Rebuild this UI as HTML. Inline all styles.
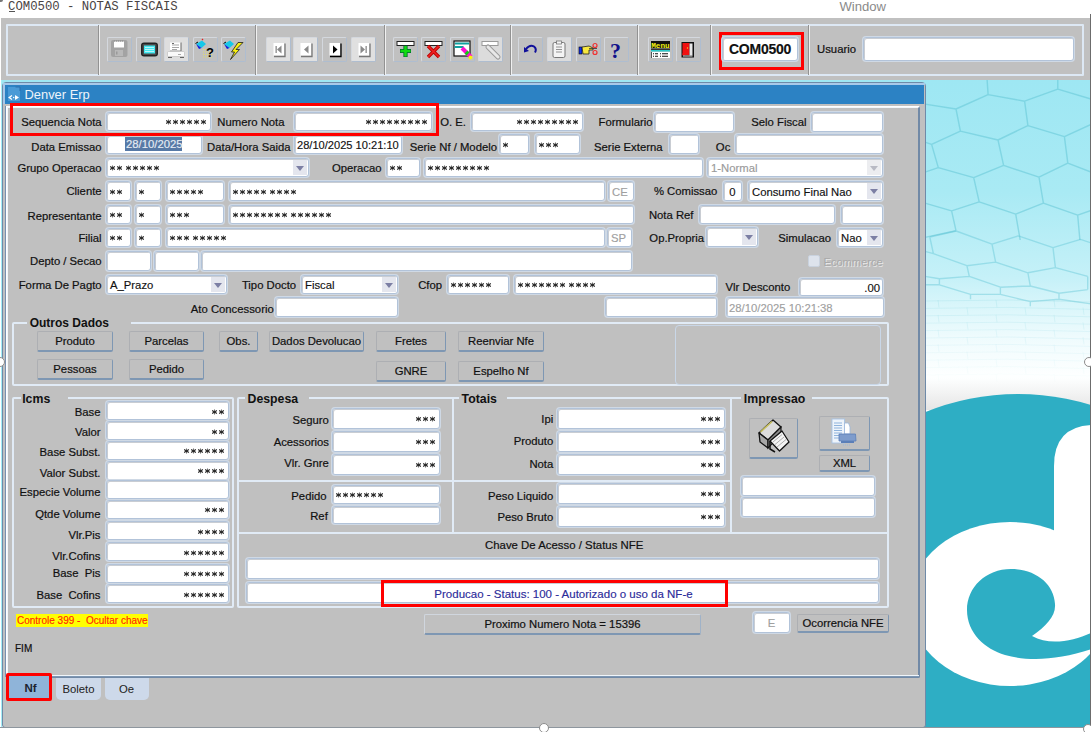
<!DOCTYPE html><html><head><meta charset="utf-8"><style>
*{box-sizing:border-box}
body{margin:0;width:1091px;height:732px;overflow:hidden;position:relative;background:#fff;font-family:"Liberation Sans",sans-serif;}
.a{position:absolute}
.f{position:absolute;background:#fff;border:1px solid #b2c3d9;border-radius:3px;box-shadow:inset 1px 1px 0 #c9cdd3,0 0 0 1px #cfd9e5;font-size:11.3px;color:#111;-webkit-text-stroke-width:0.15px;white-space:nowrap;overflow:hidden;padding:0 3px}
.st{font-size:8px;-webkit-text-stroke-width:0;position:relative;top:-1px}
.k{display:inline-block;vertical-align:middle;margin-top:-1px}
.f.s span{position:relative;top:2px}
.l{position:absolute;font-size:11.3px;color:#111;-webkit-text-stroke-width:0.2px;white-space:nowrap;text-align:right}
.c .ab{position:absolute;right:1px;top:1px;bottom:1px;width:14px}
.c .tri{position:absolute;left:3px;top:50%;margin-top:-2px;width:0;height:0;border-left:4.5px solid transparent;border-right:4.5px solid transparent;border-top:5px solid #7c7fa4}
.b{position:absolute;background:#c0c0c0;border:1px solid #adafb3;border-right-color:#7e97b3;border-bottom:2px solid #7e97b3;border-radius:2px;font-size:11.3px;color:#111;-webkit-text-stroke-width:0.2px;text-align:center;white-space:nowrap}
.lg{position:absolute;font-size:12.3px;font-weight:bold;color:#111;white-space:nowrap;background:#c0c0c0;line-height:14px;height:14px}
.tb{position:absolute;top:37px;width:25px;height:25px;border:1px solid #aebdd0;border-top-color:#d4d8de;border-left-color:#d4d8de;border-radius:2px;background:#c0c0c0}
</style></head><body>
<svg width="0" height="0" style="position:absolute"><defs><g id="k"><path d="M3.5 0.6V5.4" stroke="#6a6a6a" stroke-width="1.05"/><path d="M1.1 1.6L5.9 4.4M1.1 4.4L5.9 1.6" stroke="#262626" stroke-width="1.1"/></g><g fill="#505050"><circle cx="3.5" cy="1.05" r="0.75"/><circle cx="3.5" cy="4.95" r="0.75"/></g></g><g fill="#3a3a3a"><circle cx="3.5" cy="1" r="0.75"/><circle cx="3.5" cy="5" r="0.75"/></g></g><g fill="#3a3a3a"><circle cx="3.5" cy="0.9" r="0.8"/><circle cx="3.5" cy="5.1" r="0.8"/></g></g></defs></svg><div class="a" style="left:0;top:0;width:1091px;height:18px;background:#fff"></div>
<div class="a" style="left:0;top:0;font-family:'Liberation Mono',monospace;font-size:12.3px;color:#4a4444;left:8px;top:0px;line-height:14px;white-space:pre">COM0500 - NOTAS FISCAIS</div>
<div class="a" style="left:839.5px;top:-0.5px;font-size:13.1px;color:#8a8a8a;line-height:14px">Window</div>
<div class="a" style="left:9px;top:11px;width:6px;height:1px;background:#555"></div>
<div class="a" style="left:0;top:0;width:3px;height:2px;background:#777;border-radius:0 0 3px 0"></div>
<svg width="1091" height="732" viewBox="0 0 1091 732" style="position:absolute;left:0;top:0"><defs><linearGradient id="bgg" x1="0" y1="0" x2="0" y2="1"><stop offset="0" stop-color="#9ee7f3"/><stop offset="0.35" stop-color="#a9eaf4"/><stop offset="0.62" stop-color="#c6f1f8"/><stop offset="0.8" stop-color="#eefbfd"/><stop offset="0.92" stop-color="#fdffff"/><stop offset="1" stop-color="#fff"/></linearGradient><linearGradient id="fade" x1="0" y1="0" x2="0" y2="1"><stop offset="0" stop-color="#fff" stop-opacity="0"/><stop offset="1" stop-color="#fff" stop-opacity="1"/></linearGradient><radialGradient id="sh" cx="0.5" cy="1" r="0.6"><stop offset="0" stop-color="#dcdcdc"/><stop offset="1" stop-color="#fff" stop-opacity="0"/></radialGradient></defs><rect x="0" y="80" width="1091" height="320" fill="url(#bgg)"/><rect x="0" y="400" width="1091" height="332" fill="#fff"/><path d="M987.0 78.0L988.1 94.6M988.1 94.6L956.0 109.0M988.1 94.6L1024.6 101.2M1024.6 101.2L1057.8 89.1M1057.8 89.1L1057.8 78.0M1057.8 89.1L1091.0 99.0M956.0 109.0L925.0 104.1M956.0 109.0L960.4 131.1M1024.6 101.2L1027.9 125.6M960.4 131.1L998.0 140.0M960.4 131.1L931.6 144.4M1027.9 125.6L998.0 140.0M1027.9 125.6L1064.4 136.7M998.0 140.0L1003.6 165.4M1064.4 136.7L1067.8 163.2M1064.4 136.7L1091.0 124.5M931.6 144.4L938.3 167.6M931.6 144.4L925.0 142.2M1003.6 165.4L973.7 177.6M1003.6 165.4L1039.0 177.2M938.3 167.6L973.7 177.6M938.3 167.6L925.0 172.1M1067.8 163.2L1039.0 177.2M1067.8 163.2L1091.0 172.1M973.7 177.6L979.2 201.9M1039.0 177.2L1043.4 203.1M979.2 201.9L951.6 210.8M979.2 201.9L1015.7 214.1M1043.4 203.1L1015.7 214.1M1043.4 203.1L1077.7 215.2M951.6 210.8L956.0 230.7M951.6 210.8L925.0 203.1M1015.7 214.1L1020.2 240.0M1077.7 215.2L1079.9 240.0M1077.7 215.2L1091.0 210.4M956.0 230.7L925.0 237.4" stroke="#5ec3d4" stroke-opacity="0.5" stroke-width="1.4" fill="none"/><path d="M956.1 231.0L929.8 237.0M956.1 231.0L992.0 244.1M1018.3 235.8L992.0 244.1M1018.3 235.8L1053.0 247.7M1080.5 239.4L1053.0 247.7M1080.5 239.4L1091.0 242.9M929.8 237.0L933.4 253.7M992.0 244.1L995.6 262.1M1053.0 247.7L1055.4 267.6M933.4 253.7L966.9 265.7M933.4 253.7L925.0 251.3M995.6 262.1L966.9 265.7M995.6 262.1L1027.9 272.8M1055.4 267.6L1027.9 272.8M1055.4 267.6L1087.7 276.4M966.9 265.7L969.3 276.4M1027.9 272.8L1030.3 286.0M1087.7 276.4L1087.7 289.6M969.3 276.4L939.4 278.8M969.3 276.4L1000.4 287.2M1030.3 286.0L1000.4 287.2M1030.3 286.0L1059.0 293.2M1087.7 289.6L1059.0 293.2M939.4 278.8L939.4 284.8M939.4 278.8L925.0 276.4M1000.4 287.2L1000.4 294.4M1059.0 293.2L1059.0 299.2M925.0 284.8L939.4 284.8M939.4 284.8L970.5 294.4M1000.4 294.4L970.5 294.4M1000.4 294.4L1030.3 301.6M1059.0 299.2L1030.3 301.6M1059.0 299.2L1091.0 303.9M970.5 294.4L970.5 299.2M1030.3 301.6L1030.3 306.3M1091.0 303.9L1091.0 308.7" stroke="#5ec3d4" stroke-opacity="0.42" stroke-width="1.4" fill="none"/><path d="M925 301.0Q1008 298.5 1091 302.0M938 300.0L939 307.5M996 300.0L997 307.5M1054 300.0L1055 307.5" stroke="#7fd0de" stroke-opacity="0.20" stroke-width="1" fill="none"/><path d="M925 308.4Q1008 305.9 1091 309.4M967 307.4L968 314.9M1025 307.4L1026 314.9M1083 307.4L1084 314.9" stroke="#7fd0de" stroke-opacity="0.18" stroke-width="1" fill="none"/><path d="M925 315.8Q1008 313.3 1091 316.8M938 314.8L939 322.3M996 314.8L997 322.3M1054 314.8L1055 322.3" stroke="#7fd0de" stroke-opacity="0.17" stroke-width="1" fill="none"/><path d="M925 323.2Q1008 320.7 1091 324.2M967 322.2L968 329.7M1025 322.2L1026 329.7M1083 322.2L1084 329.7" stroke="#7fd0de" stroke-opacity="0.15" stroke-width="1" fill="none"/><path d="M925 330.6Q1008 328.1 1091 331.6M938 329.6L939 337.1M996 329.6L997 337.1M1054 329.6L1055 337.1" stroke="#7fd0de" stroke-opacity="0.13" stroke-width="1" fill="none"/><path d="M925 338.0Q1008 335.5 1091 339.0M967 337.0L968 344.5M1025 337.0L1026 344.5M1083 337.0L1084 344.5" stroke="#7fd0de" stroke-opacity="0.12" stroke-width="1" fill="none"/><path d="M925 345.4Q1008 342.9 1091 346.4M938 344.4L939 351.9M996 344.4L997 351.9M1054 344.4L1055 351.9" stroke="#7fd0de" stroke-opacity="0.10" stroke-width="1" fill="none"/><path d="M925 352.8Q1008 350.3 1091 353.8M967 351.8L968 359.3M1025 351.8L1026 359.3M1083 351.8L1084 359.3" stroke="#7fd0de" stroke-opacity="0.08" stroke-width="1" fill="none"/><path d="M925 360.2Q1008 357.7 1091 361.2M938 359.2L939 366.7M996 359.2L997 366.7M1054 359.2L1055 366.7" stroke="#7fd0de" stroke-opacity="0.07" stroke-width="1" fill="none"/><path d="M925 367.6Q1008 365.1 1091 368.6M967 366.6L968 374.1M1025 366.6L1026 374.1M1083 366.6L1084 374.1" stroke="#7fd0de" stroke-opacity="0.05" stroke-width="1" fill="none"/><path d="M925 375.0Q1008 372.5 1091 376.0M938 374.0L939 381.5M996 374.0L997 381.5M1054 374.0L1055 381.5" stroke="#7fd0de" stroke-opacity="0.03" stroke-width="1" fill="none"/><defs><linearGradient id="shd" x1="0" y1="0" x2="0" y2="1"><stop offset="0" stop-color="#d0d0d0" stop-opacity="0"/><stop offset="1" stop-color="#d0d0d0" stop-opacity="0.55"/></linearGradient></defs><rect x="925" y="378" width="166" height="32" fill="url(#shd)"/><circle cx="1018" cy="641" r="247" fill="#2eaec4"/><ellipse cx="1010" cy="604" rx="101" ry="82" fill="#fff"/><path d="M1054 604 V466 Q1054 425 1095 425 V604 Z" fill="#fff"/><path d="M1032 636 C1046 626 1056 616 1055 604 C1054 584 1036 569 1011 569 C986 569 967 587 967 610 C967 633 985 649 1005 655 C1030 662 1060 660 1095 648 L1095 631 C1075 641 1050 646 1032 636 Z" fill="#2eaec4"/></svg>
<div class="a" style="left:0;top:80px;width:1px;height:647px;background:#fff"></div>
<div class="a" style="left:1px;top:80px;width:1px;height:647px;background:#a6eef6"></div>
<div class="a" style="left:1px;top:18px;width:1089px;height:62px;background:#c0c0c0"></div>
<div class="a" style="left:1090px;top:14px;width:1px;height:718px;background:#6c6c6c"></div>
<div class="a" style="left:6px;top:24px;width:1078px;height:52px;border:2px solid #dde8f4;border-radius:1px"></div>
<div class="a" style="left:98px;top:25px;width:2px;height:50px;background:#f0f0f0;border-left:1px solid #929292"></div>
<div class="a" style="left:255px;top:25px;width:2px;height:50px;background:#f0f0f0;border-left:1px solid #929292"></div>
<div class="a" style="left:384px;top:25px;width:2px;height:50px;background:#f0f0f0;border-left:1px solid #929292"></div>
<div class="a" style="left:510px;top:25px;width:2px;height:50px;background:#f0f0f0;border-left:1px solid #929292"></div>
<div class="a" style="left:637px;top:25px;width:2px;height:50px;background:#f0f0f0;border-left:1px solid #929292"></div>
<div class="a" style="left:710px;top:25px;width:2px;height:50px;background:#f0f0f0;border-left:1px solid #929292"></div>
<div class="a" style="left:808px;top:25px;width:2px;height:50px;background:#f0f0f0;border-left:1px solid #929292"></div>
<div class="tb" style="left:107.0px"><svg width="25" height="25" viewBox="0 0 25 25" style="position:absolute;left:-1px;top:-1px"><rect x="4" y="3" width="16.5" height="17" rx="2" fill="#a3a3a3"/><rect x="7" y="4.5" width="10" height="6" fill="#fff"/><rect x="8" y="13" width="8" height="6" fill="#b9b9b9"/><rect x="9" y="14.5" width="1.5" height="3" fill="#9a9a9a"/><path d="M7 4h1M9 4h1M11 4h1M13 4h1M15 4h1" stroke="#8a8a8a" stroke-width="1"/></svg></div>
<div class="tb" style="left:135.5px"><svg width="25" height="25" viewBox="0 0 25 25" style="position:absolute;left:-1px;top:-1px"><rect x="5" y="5.5" width="17" height="14" rx="3" fill="#222"/><rect x="6.5" y="7" width="14" height="11" rx="1" fill="#4a4a4a"/><rect x="8" y="8.5" width="11" height="8" fill="#44e8f0"/><path d="M9 10.5h9M9 12.5h9M9 14.5h9" stroke="#d8f8fa" stroke-width="0.8"/></svg></div>
<div class="tb" style="left:164.0px"><svg width="25" height="25" viewBox="0 0 25 25" style="position:absolute;left:-1px;top:-1px"><rect x="1" y="1" width="23" height="23" fill="#dedede"/><path d="M6 5.5h11v8.5H6Z" fill="#fff"/><path d="M17 5.5v8.5" stroke="#666" stroke-width="1"/><path d="M6 14h11" stroke="#777" stroke-width="0.8"/><path d="M8 8h7M8 10.5h7M8 12.5h5" stroke="#6a6a6a" stroke-width="0.6"/><path d="M8 6.5h2" stroke="#444" stroke-width="0.8"/><rect x="3.5" y="14.5" width="17" height="5" rx="1" fill="#fafafa" stroke="#b8b8b8" stroke-width="0.6"/><path d="M4 20.5h4M16 20.5h4" stroke="#555" stroke-width="0.9"/><path d="M14 17.5h3" stroke="#888" stroke-width="0.7"/></svg></div>
<div class="tb" style="left:192.7px"><svg width="25" height="25" viewBox="0 0 25 25" style="position:absolute;left:-1px;top:-1px"><path d="M3 7 L9 3.5 L13 7 L8.5 11 Z" fill="#16c8e8"/><path d="M3 7 L8.5 11 L6 12 Z" fill="#1020d8"/><path d="M2.5 6.5 L5 5" stroke="#000" stroke-width="1"/><path d="M9 3 L10 2" stroke="#e02020" stroke-width="1.2"/><path d="M10 12.5h10M10 15h10M10 17.5h10M10 20h10" stroke="#e8e060" stroke-width="0.9" stroke-dasharray="1 1"/><text x="13" y="20" font-family="Liberation Sans" font-weight="bold" font-size="13" fill="#000">?</text></svg></div>
<div class="tb" style="left:220.7px"><svg width="25" height="25" viewBox="0 0 25 25" style="position:absolute;left:-1px;top:-1px"><path d="M3 7 L9 3.5 L13 7 L8.5 11 Z" fill="#16c8e8"/><path d="M3 7 L8.5 11 L6 12 Z" fill="#1020d8"/><path d="M2.5 6.5 L5 5" stroke="#000" stroke-width="1"/><path d="M22 5.5 L15 12.5 L18.5 12.5 L9.5 22.5 L13.5 15 L10.5 15 L17 5.5 Z" fill="#f8f010" stroke="#1a1a1a" stroke-width="0.8" stroke-linejoin="round"/></svg></div>
<div class="tb" style="left:265.6px"><svg width="25" height="25" viewBox="0 0 25 25" style="position:absolute;left:-1px;top:-1px"><rect x="1" y="1" width="23" height="23" fill="#e0e0e0"/><rect x="7.5" y="6" width="10.5" height="12.5" fill="#fff"/><path d="M8 19.5h11V6.5" stroke="#777" stroke-width="1.3" fill="none"/><rect x="9.5" y="9" width="1.3" height="7" fill="#8a8a8a"/><path d="M15.5 8.5 L11 12.5 L15.5 16.5 Z" fill="#8a8a8a"/></svg></div>
<div class="tb" style="left:292.7px"><svg width="25" height="25" viewBox="0 0 25 25" style="position:absolute;left:-1px;top:-1px"><rect x="1" y="1" width="23" height="23" fill="#e0e0e0"/><rect x="7.5" y="6" width="10.5" height="12.5" fill="#fff"/><path d="M8 19.5h11V6.5" stroke="#777" stroke-width="1.3" fill="none"/><path d="M15.5 8.5 L11 12.5 L15.5 16.5 Z" fill="#8a8a8a"/></svg></div>
<div class="tb" style="left:321.5px"><svg width="25" height="25" viewBox="0 0 25 25" style="position:absolute;left:-1px;top:-1px"><rect x="7.5" y="6" width="10.5" height="12.5" fill="#fff"/><path d="M8 19.5h11V6.5" stroke="#000" stroke-width="1.3" fill="none"/><path d="M11 8.5 L15.5 12.5 L11 16.5 Z" fill="#000"/></svg></div>
<div class="tb" style="left:350.5px"><svg width="25" height="25" viewBox="0 0 25 25" style="position:absolute;left:-1px;top:-1px"><rect x="1" y="1" width="23" height="23" fill="#e0e0e0"/><rect x="7.5" y="6" width="10.5" height="12.5" fill="#fff"/><path d="M8 19.5h11V6.5" stroke="#777" stroke-width="1.3" fill="none"/><rect x="14.5" y="9" width="1.3" height="7" fill="#8a8a8a"/><path d="M9.5 8.5 L14 12.5 L9.5 16.5 Z" fill="#8a8a8a"/></svg></div>
<div class="tb" style="left:392.6px"><svg width="25" height="25" viewBox="0 0 25 25" style="position:absolute;left:-1px;top:-1px"><rect x="4" y="4.5" width="17" height="4" fill="#fff" stroke="#222" stroke-width="1"/><path d="M12.5 8.5 V20 M7 14 H18" stroke="#063" stroke-width="4.2"/><path d="M12.5 9 V19.5 M7.5 14 H17.5" stroke="#1d1" stroke-width="2.6"/></svg></div>
<div class="tb" style="left:420.9px"><svg width="25" height="25" viewBox="0 0 25 25" style="position:absolute;left:-1px;top:-1px"><rect x="4" y="4.5" width="17" height="4" fill="#fff" stroke="#222" stroke-width="1"/><path d="M7 9 L18 20 M18 9 L7 20" stroke="#b00" stroke-width="3.4"/><path d="M7 9 L18 20 M18 9 L7 20" stroke="#e22" stroke-width="1.6"/></svg></div>
<div class="tb" style="left:449.5px"><svg width="25" height="25" viewBox="0 0 25 25" style="position:absolute;left:-1px;top:-1px"><rect x="4" y="4" width="16" height="15" fill="#fff" stroke="#111" stroke-width="1.2"/><rect x="5" y="5.5" width="14" height="2" fill="#10a0a0"/><rect x="4.5" y="9" width="9" height="2" fill="#10a0a0"/><path d="M12 11 L21 20" stroke="#ff10d0" stroke-width="4"/><path d="M16 15 L18 17" stroke="#10d010" stroke-width="4"/><circle cx="20.5" cy="20.5" r="2" fill="#f8f010"/></svg></div>
<div class="tb" style="left:477.6px"><svg width="25" height="25" viewBox="0 0 25 25" style="position:absolute;left:-1px;top:-1px"><rect x="1" y="1" width="23" height="23" fill="#dcdcdc"/><rect x="4" y="4.5" width="16" height="4" fill="#fff" stroke="#9a9a9a" stroke-width="1"/><path d="M10 10 L20 20" stroke="#9a9a9a" stroke-width="5" stroke-linecap="round"/><path d="M10 10 L20 20" stroke="#e8e8e8" stroke-width="3" stroke-linecap="round"/></svg></div>
<div class="tb" style="left:517.9px"><svg width="25" height="25" viewBox="0 0 25 25" style="position:absolute;left:-1px;top:-1px"><path d="M8 12 Q12 7 16 9.5 Q19 12 17 15.5" stroke="#10109a" stroke-width="2" fill="none"/><path d="M6 10 L6 15.5 L11 14 Z" fill="#10109a"/></svg></div>
<div class="tb" style="left:546.9px"><svg width="25" height="25" viewBox="0 0 25 25" style="position:absolute;left:-1px;top:-1px"><rect x="1" y="1" width="23" height="23" fill="#dcdcdc"/><rect x="6" y="5.5" width="12" height="15" rx="1.5" fill="#f4f4f4" stroke="#777" stroke-width="1"/><rect x="9.5" y="4" width="5" height="3" fill="#f4f4f4" stroke="#777" stroke-width="0.8"/><path d="M9 10h6M9 12.5h6M9 15h6" stroke="#888" stroke-width="0.9"/></svg></div>
<div class="tb" style="left:575.7px"><svg width="25" height="25" viewBox="0 0 25 25" style="position:absolute;left:-1px;top:-1px"><rect x="3" y="10" width="3" height="7" fill="#1030f0" stroke="#000" stroke-width="0.6"/><path d="M6 10 L13 9 L17 11 L17 13 L13 13 L13 17 L7 17 Z" fill="#f8e840" stroke="#222" stroke-width="0.8"/><circle cx="19" cy="8.5" r="2" fill="none" stroke="#f03030" stroke-width="1.2"/><circle cx="19" cy="15.5" r="2" fill="none" stroke="#f03030" stroke-width="1.2"/><path d="M13 11.5 L21 11.5" stroke="#333" stroke-width="0.8"/></svg></div>
<div class="tb" style="left:603.7px"><svg width="25" height="25" viewBox="0 0 25 25" style="position:absolute;left:-1px;top:-1px"><text x="6" y="20.5" font-family="Liberation Serif" font-weight="bold" font-size="22" fill="#10108a">?</text></svg></div>
<div class="tb" style="left:647.9px"><svg width="25" height="25" viewBox="0 0 25 25" style="position:absolute;left:-1px;top:-1px"><rect x="3" y="4" width="19" height="7.5" fill="#111"/><text x="3.2" y="10.5" font-family="Liberation Mono" font-weight="bold" font-size="8" fill="#f0f010" textLength="18.5" lengthAdjust="spacingAndGlyphs">Menu</text><rect x="3" y="12" width="19" height="1.3" fill="#333"/><rect x="3" y="13.2" width="19" height="1.2" fill="#10d8d8"/><rect x="3" y="15" width="19" height="6" fill="#fff"/><path d="M3.5 15 V21" stroke="#555" stroke-width="1"/><path d="M5 16.8h1M7 16.8h3M12 16.8h1M14 16.8h6M5 19.2h1M7 19.2h3M12 19.2h1M14 19.2h6" stroke="#111" stroke-width="1.1"/></svg></div>
<div class="tb" style="left:675.9px"><svg width="25" height="25" viewBox="0 0 25 25" style="position:absolute;left:-1px;top:-1px"><rect x="5.5" y="5" width="12.5" height="15.5" fill="#111"/><rect x="6.5" y="6" width="7" height="12" fill="#f01010"/><path d="M6.5 16 L9 18.5 L6.5 18.5Z" fill="#f01010"/><rect x="13.5" y="6.5" width="3" height="12" fill="#e8e8e8"/><rect x="7" y="18.5" width="9.5" height="1" fill="#ddd"/><circle cx="11.5" cy="11" r="0.7" fill="#f0d020"/></svg></div>
<div class="a" style="left:719px;top:32px;width:85px;height:38px;border:3px solid #f00;background:#c0c0c0"></div>
<div class="f" style="left:722px;top:37px;width:76px;height:24px;font-size:14px;letter-spacing:-0.25px;font-weight:bold;color:#111;line-height:23px;text-align:center;padding:0">COM0500</div>
<div class="l" style="left:636.0px;top:38.0px;width:220px;height:23.0px;line-height:23.0px;font-size:11.3px">Usuario</div>
<div class="f" style="left:863.0px;top:37.0px;width:211.0px;height:24.0px;line-height:24.5px;text-align:left;"></div>
<div class="a" style="left:2px;top:82px;width:924px;height:646px;background:#c0c0c0;border:1px solid #6f8aa8;border-radius:4px 4px 3px 3px"></div>
<div class="a" style="left:3px;top:83px;width:922px;height:2px;background:#a9c9e9"></div>
<div class="a" style="left:5px;top:85px;width:919px;height:19px;background:#2c82c4"></div>
<svg class="a" style="left:7px;top:86px" width="15" height="16" viewBox="0 0 15 16"><rect x="1" y="1" width="12" height="14" fill="#4a9ad6"/><path d="M8.5 1h4.5v4" fill="none" stroke="#2a6fae" stroke-width="1"/><path d="M5 9.5 L2.2 11.5 L5 13.5" fill="none" stroke="#fff" stroke-width="1.3"/><path d="M8 9 L12 11.5 L8 14 Z" fill="#fff"/><circle cx="6.7" cy="11.5" r="0.7" fill="#fff"/></svg>
<div class="a" style="left:24.5px;top:85px;height:19px;line-height:19px;font-size:12.9px;color:#eef4fa">Denver Erp</div>
<div class="a" style="left:3px;top:84px;width:2px;height:20px;background:#a8c8e8"></div>
<div class="a" style="left:5px;top:106px;width:1px;height:571px;background:#7890b0"></div>
<div class="a" style="left:6px;top:106px;width:914px;height:572px;border:2px solid #f2f6fa;border-right-color:#7189a6;border-bottom-color:#7189a6;border-radius:2px"></div>
<div class="a" style="left:6px;top:106px;width:913px;height:571px;border-top:1px solid #fff;border-left:1px solid #fff"></div>
<div class="l" style="left:-118.4px;top:113.0px;width:220px;height:18.0px;line-height:18.0px;">Sequencia Nota</div>
<div class="f" style="left:106.0px;top:112.0px;width:105.0px;height:19.0px;line-height:19.5px;text-align:right;"><span class="st" style=""><svg class="k" width="7" height="6"><use href="#k"/></svg><svg class="k" width="7" height="6"><use href="#k"/></svg><svg class="k" width="7" height="6"><use href="#k"/></svg><svg class="k" width="7" height="6"><use href="#k"/></svg><svg class="k" width="7" height="6"><use href="#k"/></svg><svg class="k" width="7" height="6"><use href="#k"/></svg></span></div>
<div class="l" style="left:64.5px;top:113.0px;width:220px;height:18.0px;line-height:18.0px;">Numero Nota</div>
<div class="f" style="left:294.0px;top:112.0px;width:138.0px;height:19.0px;line-height:19.5px;text-align:right;"><span class="st" style=""><svg class="k" width="7" height="6"><use href="#k"/></svg><svg class="k" width="7" height="6"><use href="#k"/></svg><svg class="k" width="7" height="6"><use href="#k"/></svg><svg class="k" width="7" height="6"><use href="#k"/></svg><svg class="k" width="7" height="6"><use href="#k"/></svg><svg class="k" width="7" height="6"><use href="#k"/></svg><svg class="k" width="7" height="6"><use href="#k"/></svg><svg class="k" width="7" height="6"><use href="#k"/></svg><svg class="k" width="7" height="6"><use href="#k"/></svg></span></div>
<div class="l" style="left:246.0px;top:113.0px;width:220px;height:18.0px;line-height:18.0px;">O. E.</div>
<div class="f" style="left:471.0px;top:112.0px;width:112.0px;height:19.0px;line-height:19.5px;text-align:right;"><span class="st" style=""><svg class="k" width="7" height="6"><use href="#k"/></svg><svg class="k" width="7" height="6"><use href="#k"/></svg><svg class="k" width="7" height="6"><use href="#k"/></svg><svg class="k" width="7" height="6"><use href="#k"/></svg><svg class="k" width="7" height="6"><use href="#k"/></svg><svg class="k" width="7" height="6"><use href="#k"/></svg><svg class="k" width="7" height="6"><use href="#k"/></svg><svg class="k" width="7" height="6"><use href="#k"/></svg><svg class="k" width="7" height="6"><use href="#k"/></svg></span></div>
<div class="l" style="left:432.5px;top:113.0px;width:220px;height:18.0px;line-height:18.0px;">Formulario</div>
<div class="f" style="left:654.0px;top:112.0px;width:80.0px;height:20.0px;line-height:20.5px;text-align:left;"></div>
<div class="l" style="left:586.5px;top:113.0px;width:220px;height:18.0px;line-height:18.0px;">Selo Fiscal</div>
<div class="f" style="left:811.0px;top:112.0px;width:72.0px;height:20.0px;line-height:20.5px;text-align:left;"></div>
<div class="l" style="left:-118.4px;top:138.0px;width:220px;height:18.0px;line-height:18.0px;">Data Emissao</div>
<div class="f" style="left:106.0px;top:135.0px;width:96.0px;height:19.0px;line-height:19.5px;text-align:left;"><span style="position:absolute;left:18px;top:1px;height:14px;width:57px;background:#5779a6;color:#e6ecf4;line-height:14px;padding-left:1px;font-size:11.3px">28/10/2025</span></div>
<div class="l" style="left:70.6px;top:138.0px;width:220px;height:18.0px;line-height:18.0px;">Data/Hora Saida</div>
<div class="f" style="left:294.0px;top:135.0px;width:108.0px;height:19.0px;line-height:19.5px;text-align:left;padding-left:2px;font-size:11.1px">28/10/2025 10:21:10</div>
<div class="l" style="left:277.0px;top:137.5px;width:220px;height:18.0px;line-height:18.0px;">Serie Nf / Modelo</div>
<div class="f" style="left:499.0px;top:134.0px;width:30.0px;height:20.0px;line-height:20.5px;text-align:left;"><span class="st" style="margin-left:-1px"><svg class="k" width="7" height="6"><use href="#k"/></svg></span></div>
<div class="f" style="left:535.0px;top:134.0px;width:45.0px;height:20.0px;line-height:20.5px;text-align:left;"><span class="st" style="margin-left:-1px"><svg class="k" width="7" height="6"><use href="#k"/></svg><svg class="k" width="7" height="6"><use href="#k"/></svg><svg class="k" width="7" height="6"><use href="#k"/></svg></span></div>
<div class="l" style="left:442.5px;top:138.0px;width:220px;height:18.0px;line-height:18.0px;">Serie Externa</div>
<div class="f" style="left:669.0px;top:134.0px;width:30.0px;height:20.0px;line-height:20.5px;text-align:left;"></div>
<div class="l" style="left:510.3px;top:138.0px;width:220px;height:18.0px;line-height:18.0px;">Oc</div>
<div class="f" style="left:735.0px;top:134.0px;width:148.0px;height:20.0px;line-height:20.5px;text-align:left;"></div>
<div class="l" style="left:-118.4px;top:159.0px;width:220px;height:18.0px;line-height:18.0px;">Grupo Operacao</div>
<div class="f c" style="left:106.0px;top:158.0px;width:203.0px;height:19.0px;line-height:19.5px;"><span class="st" style="margin-left:-1px"><svg class="k" width="7" height="6"><use href="#k"/></svg><svg class="k" width="7" height="6"><use href="#k"/></svg> <svg class="k" width="7" height="6"><use href="#k"/></svg><svg class="k" width="7" height="6"><use href="#k"/></svg><svg class="k" width="7" height="6"><use href="#k"/></svg><svg class="k" width="7" height="6"><use href="#k"/></svg><svg class="k" width="7" height="6"><use href="#k"/></svg></span><div class="ab" style="background:#e4e6ee"><div class="tri" style="border-top-color:#7c7fa4"></div></div></div>
<div class="l" style="left:161.5px;top:159.0px;width:220px;height:18.0px;line-height:18.0px;">Operacao</div>
<div class="f" style="left:386.0px;top:158.0px;width:34.0px;height:19.0px;line-height:19.5px;text-align:left;"><span class="st" style="margin-left:-1px"><svg class="k" width="7" height="6"><use href="#k"/></svg><svg class="k" width="7" height="6"><use href="#k"/></svg></span></div>
<div class="f" style="left:424.0px;top:158.0px;width:279.0px;height:19.0px;line-height:19.5px;text-align:left;"><span class="st" style="margin-left:-1px"><svg class="k" width="7" height="6"><use href="#k"/></svg><svg class="k" width="7" height="6"><use href="#k"/></svg><svg class="k" width="7" height="6"><use href="#k"/></svg><svg class="k" width="7" height="6"><use href="#k"/></svg><svg class="k" width="7" height="6"><use href="#k"/></svg><svg class="k" width="7" height="6"><use href="#k"/></svg><svg class="k" width="7" height="6"><use href="#k"/></svg><svg class="k" width="7" height="6"><use href="#k"/></svg><svg class="k" width="7" height="6"><use href="#k"/></svg></span></div>
<div class="f c" style="left:707.0px;top:158.0px;width:176.0px;height:19.0px;line-height:19.5px;color:#9a9a9a;">1-Normal<div class="ab" style="background:#ecedf0"><div class="tri" style="border-top-color:#b8bac4"></div></div></div>
<div class="l" style="left:-118.4px;top:182.0px;width:220px;height:19.0px;line-height:19.0px;">Cliente</div>
<div class="f" style="left:106.0px;top:181.0px;width:25.0px;height:20.0px;line-height:20.5px;text-align:left;"><span class="st" style="margin-left:-1px"><svg class="k" width="7" height="6"><use href="#k"/></svg><svg class="k" width="7" height="6"><use href="#k"/></svg></span></div>
<div class="f" style="left:135.0px;top:181.0px;width:26.0px;height:20.0px;line-height:20.5px;text-align:left;"><span class="st" style="margin-left:-1px"><svg class="k" width="7" height="6"><use href="#k"/></svg></span></div>
<div class="f" style="left:166.0px;top:181.0px;width:58.0px;height:20.0px;line-height:20.5px;text-align:left;"><span class="st" style="margin-left:-1px"><svg class="k" width="7" height="6"><use href="#k"/></svg><svg class="k" width="7" height="6"><use href="#k"/></svg><svg class="k" width="7" height="6"><use href="#k"/></svg><svg class="k" width="7" height="6"><use href="#k"/></svg><svg class="k" width="7" height="6"><use href="#k"/></svg></span></div>
<div class="f" style="left:229.0px;top:181.0px;width:376.0px;height:20.0px;line-height:20.5px;text-align:left;"><span class="st" style="margin-left:-1px"><svg class="k" width="7" height="6"><use href="#k"/></svg><svg class="k" width="7" height="6"><use href="#k"/></svg><svg class="k" width="7" height="6"><use href="#k"/></svg><svg class="k" width="7" height="6"><use href="#k"/></svg><svg class="k" width="7" height="6"><use href="#k"/></svg> <svg class="k" width="7" height="6"><use href="#k"/></svg><svg class="k" width="7" height="6"><use href="#k"/></svg><svg class="k" width="7" height="6"><use href="#k"/></svg><svg class="k" width="7" height="6"><use href="#k"/></svg></span></div>
<div class="f" style="left:608.0px;top:181.0px;width:26.0px;height:20.0px;line-height:20.5px;text-align:left;color:#a0a0a0;">CE</div>
<div class="l" style="left:497.3px;top:182.0px;width:220px;height:19.0px;line-height:19.0px;">% Comissao</div>
<div class="f" style="left:723.0px;top:181.0px;width:19.0px;height:20.0px;line-height:20.5px;text-align:center;padding:0">0</div>
<div class="f c" style="left:748.0px;top:181.0px;width:135.0px;height:20.0px;line-height:20.5px;">Consumo Final Nao<div class="ab" style="background:#e4e6ee"><div class="tri" style="border-top-color:#7c7fa4"></div></div></div>
<div class="l" style="left:-118.4px;top:207.0px;width:220px;height:18.0px;line-height:18.0px;">Representante</div>
<div class="f" style="left:106.0px;top:205.0px;width:25.0px;height:19.0px;line-height:19.5px;text-align:left;"><span class="st" style="margin-left:-1px"><svg class="k" width="7" height="6"><use href="#k"/></svg><svg class="k" width="7" height="6"><use href="#k"/></svg></span></div>
<div class="f" style="left:135.0px;top:205.0px;width:26.0px;height:19.0px;line-height:19.5px;text-align:left;"><span class="st" style="margin-left:-1px"><svg class="k" width="7" height="6"><use href="#k"/></svg></span></div>
<div class="f" style="left:166.0px;top:205.0px;width:58.0px;height:19.0px;line-height:19.5px;text-align:left;"><span class="st" style="margin-left:-1px"><svg class="k" width="7" height="6"><use href="#k"/></svg><svg class="k" width="7" height="6"><use href="#k"/></svg><svg class="k" width="7" height="6"><use href="#k"/></svg></span></div>
<div class="f" style="left:229.0px;top:205.0px;width:405.0px;height:19.0px;line-height:19.5px;text-align:left;"><span class="st" style="margin-left:-1px"><svg class="k" width="7" height="6"><use href="#k"/></svg><svg class="k" width="7" height="6"><use href="#k"/></svg><svg class="k" width="7" height="6"><use href="#k"/></svg><svg class="k" width="7" height="6"><use href="#k"/></svg><svg class="k" width="7" height="6"><use href="#k"/></svg><svg class="k" width="7" height="6"><use href="#k"/></svg><svg class="k" width="7" height="6"><use href="#k"/></svg><svg class="k" width="7" height="6"><use href="#k"/></svg> <svg class="k" width="7" height="6"><use href="#k"/></svg><svg class="k" width="7" height="6"><use href="#k"/></svg><svg class="k" width="7" height="6"><use href="#k"/></svg><svg class="k" width="7" height="6"><use href="#k"/></svg><svg class="k" width="7" height="6"><use href="#k"/></svg><svg class="k" width="7" height="6"><use href="#k"/></svg></span></div>
<div class="l" style="left:473.5px;top:206.0px;width:220px;height:18.0px;line-height:18.0px;">Nota Ref</div>
<div class="f" style="left:699.0px;top:205.0px;width:136.0px;height:19.0px;line-height:19.5px;text-align:left;"></div>
<div class="f" style="left:841.0px;top:205.0px;width:42.0px;height:19.0px;line-height:19.5px;text-align:left;"></div>
<div class="l" style="left:-118.4px;top:229.0px;width:220px;height:18.0px;line-height:18.0px;">Filial</div>
<div class="f" style="left:106.0px;top:228.0px;width:25.0px;height:19.0px;line-height:19.5px;text-align:left;"><span class="st" style="margin-left:-1px"><svg class="k" width="7" height="6"><use href="#k"/></svg><svg class="k" width="7" height="6"><use href="#k"/></svg></span></div>
<div class="f" style="left:135.0px;top:228.0px;width:26.0px;height:19.0px;line-height:19.5px;text-align:left;"><span class="st" style="margin-left:-1px"><svg class="k" width="7" height="6"><use href="#k"/></svg></span></div>
<div class="f" style="left:166.0px;top:228.0px;width:439.0px;height:19.0px;line-height:19.5px;text-align:left;"><span class="st" style="margin-left:-1px"><svg class="k" width="7" height="6"><use href="#k"/></svg><svg class="k" width="7" height="6"><use href="#k"/></svg><svg class="k" width="7" height="6"><use href="#k"/></svg> <svg class="k" width="7" height="6"><use href="#k"/></svg><svg class="k" width="7" height="6"><use href="#k"/></svg><svg class="k" width="7" height="6"><use href="#k"/></svg><svg class="k" width="7" height="6"><use href="#k"/></svg><svg class="k" width="7" height="6"><use href="#k"/></svg></span></div>
<div class="f" style="left:607.0px;top:228.0px;width:25.0px;height:19.0px;line-height:19.5px;text-align:left;color:#a0a0a0;">SP</div>
<div class="l" style="left:484.0px;top:229.0px;width:220px;height:18.0px;line-height:18.0px;">Op.Propria</div>
<div class="f c" style="left:706.0px;top:227.0px;width:52.0px;height:20.0px;line-height:20.5px;"><div class="ab" style="background:#e4e6ee"><div class="tri" style="border-top-color:#7c7fa4"></div></div></div>
<div class="l" style="left:611.0px;top:229.0px;width:220px;height:18.0px;line-height:18.0px;">Simulacao</div>
<div class="f c" style="left:837.0px;top:228.0px;width:46.0px;height:19.0px;line-height:19.5px;">Nao<div class="ab" style="background:#e4e6ee"><div class="tri" style="border-top-color:#7c7fa4"></div></div></div>
<div class="l" style="left:-118.4px;top:252.0px;width:220px;height:19.0px;line-height:19.0px;">Depto / Secao</div>
<div class="f" style="left:106.0px;top:251.0px;width:45.0px;height:20.0px;line-height:20.5px;text-align:left;"></div>
<div class="f" style="left:154.0px;top:251.0px;width:45.0px;height:20.0px;line-height:20.5px;text-align:left;"></div>
<div class="f" style="left:201.0px;top:251.0px;width:431.0px;height:20.0px;line-height:20.5px;text-align:left;"></div>
<div class="a" style="left:808px;top:255px;width:12px;height:12px;background:#dde3ec;border:1px solid #c9d2de;border-radius:2px"></div>
<div class="a" style="left:823.5px;top:255px;font-size:11.1px;line-height:14px;color:#a9a9a9;text-shadow:1px 1px 0 #e8e8e8">Ecommerce</div>
<div class="l" style="left:-118.4px;top:276.0px;width:220px;height:18.0px;line-height:18.0px;">Forma De Pagto</div>
<div class="f c" style="left:106.0px;top:275.0px;width:121.0px;height:19.0px;line-height:19.5px;">A_Prazo<div class="ab" style="background:#e4e6ee"><div class="tri" style="border-top-color:#7c7fa4"></div></div></div>
<div class="l" style="left:76.1px;top:276.0px;width:220px;height:18.0px;line-height:18.0px;">Tipo Docto</div>
<div class="f c" style="left:301.0px;top:275.0px;width:97.0px;height:19.0px;line-height:19.5px;">Fiscal<div class="ab" style="background:#e4e6ee"><div class="tri" style="border-top-color:#7c7fa4"></div></div></div>
<div class="l" style="left:222.0px;top:276.0px;width:220px;height:18.0px;line-height:18.0px;">Cfop</div>
<div class="f" style="left:447.0px;top:275.0px;width:62.0px;height:19.0px;line-height:19.5px;text-align:left;"><span class="st" style="margin-left:-1px"><svg class="k" width="7" height="6"><use href="#k"/></svg><svg class="k" width="7" height="6"><use href="#k"/></svg><svg class="k" width="7" height="6"><use href="#k"/></svg><svg class="k" width="7" height="6"><use href="#k"/></svg><svg class="k" width="7" height="6"><use href="#k"/></svg><svg class="k" width="7" height="6"><use href="#k"/></svg></span></div>
<div class="f" style="left:514.0px;top:275.0px;width:203.0px;height:19.0px;line-height:19.5px;text-align:left;"><span class="st" style="margin-left:-1px"><svg class="k" width="7" height="6"><use href="#k"/></svg><svg class="k" width="7" height="6"><use href="#k"/></svg><svg class="k" width="7" height="6"><use href="#k"/></svg><svg class="k" width="7" height="6"><use href="#k"/></svg><svg class="k" width="7" height="6"><use href="#k"/></svg><svg class="k" width="7" height="6"><use href="#k"/></svg><svg class="k" width="7" height="6"><use href="#k"/></svg> <svg class="k" width="7" height="6"><use href="#k"/></svg><svg class="k" width="7" height="6"><use href="#k"/></svg><svg class="k" width="7" height="6"><use href="#k"/></svg><svg class="k" width="7" height="6"><use href="#k"/></svg></span></div>
<div class="l" style="left:570.2px;top:278.0px;width:220px;height:18.0px;line-height:18.0px;">Vlr Desconto</div>
<div class="f" style="left:799.0px;top:278.0px;width:84.0px;height:18.0px;line-height:18.5px;text-align:right;padding-right:2px">.00</div>
<div class="l" style="left:53.7px;top:300.0px;width:220px;height:19.0px;line-height:19.0px;">Ato Concessorio</div>
<div class="f" style="left:275.0px;top:297.0px;width:123.0px;height:20.0px;line-height:20.5px;text-align:left;"></div>
<div class="f" style="left:605.0px;top:297.0px;width:112.0px;height:20.0px;line-height:20.5px;text-align:left;"></div>
<div class="f" style="left:726.0px;top:297.0px;width:158.0px;height:20.0px;line-height:20.5px;text-align:left;color:#a0a0a0;padding-left:2px">28/10/2025 10:21:38</div>
<div class="a" style="left:12px;top:322px;width:877px;height:64px;border:2px solid #e1ebf6;border-radius:2px"></div>
<div class="lg" style="left:27px;width:104px;padding-left:2.7px;top:315.5px;font-size:12px">Outros Dados</div>
<div class="a" style="left:675px;top:325px;width:206px;height:60px;border:1px solid #c9d7e8;border-radius:4px"></div>
<div class="b" style="left:37.0px;top:331.0px;width:76.0px;height:21.0px;line-height:19.0px;">Produto</div>
<div class="b" style="left:129.0px;top:331.0px;width:75.0px;height:21.0px;line-height:19.0px;">Parcelas</div>
<div class="b" style="left:219.0px;top:331.0px;width:39.0px;height:21.0px;line-height:19.0px;">Obs.</div>
<div class="b" style="left:269.0px;top:331.0px;width:95.0px;height:21.0px;line-height:19.0px;">Dados Devolucao</div>
<div class="b" style="left:376.0px;top:331.0px;width:70.0px;height:21.0px;line-height:19.0px;">Fretes</div>
<div class="b" style="left:458.0px;top:331.0px;width:86.0px;height:21.0px;line-height:19.0px;">Reenviar Nfe</div>
<div class="b" style="left:37.0px;top:359.0px;width:76.0px;height:21.0px;line-height:19.0px;">Pessoas</div>
<div class="b" style="left:129.0px;top:359.0px;width:75.0px;height:21.0px;line-height:19.0px;">Pedido</div>
<div class="b" style="left:376.0px;top:361.0px;width:70.0px;height:21.0px;line-height:19.0px;">GNRE</div>
<div class="b" style="left:458.0px;top:361.0px;width:86.0px;height:21.0px;line-height:19.0px;">Espelho Nf</div>
<div class="a" style="left:12px;top:397px;width:222px;height:211px;border:2px solid #e1ebf6;border-radius:2px"></div>
<div class="lg" style="left:21px;width:47px;padding-left:1.2px;top:391.5px">Icms</div>
<div class="l" style="left:-119.5px;top:403.2px;width:220px;height:18.0px;line-height:18.0px;white-space:pre">Base</div>
<div class="f" style="left:106.0px;top:401.2px;width:123.0px;height:19.0px;line-height:19.5px;text-align:right;"><span class="st" style=""><svg class="k" width="7" height="6"><use href="#k"/></svg><svg class="k" width="7" height="6"><use href="#k"/></svg></span></div>
<div class="l" style="left:-119.5px;top:422.9px;width:220px;height:18.0px;line-height:18.0px;white-space:pre">Valor</div>
<div class="f" style="left:106.0px;top:421.4px;width:123.0px;height:19.0px;line-height:19.5px;text-align:right;"><span class="st" style=""><svg class="k" width="7" height="6"><use href="#k"/></svg><svg class="k" width="7" height="6"><use href="#k"/></svg></span></div>
<div class="l" style="left:-119.5px;top:443.3px;width:220px;height:18.0px;line-height:18.0px;white-space:pre">Base Subst.</div>
<div class="f" style="left:106.0px;top:440.8px;width:123.0px;height:19.0px;line-height:19.5px;text-align:right;"><span class="st" style=""><svg class="k" width="7" height="6"><use href="#k"/></svg><svg class="k" width="7" height="6"><use href="#k"/></svg><svg class="k" width="7" height="6"><use href="#k"/></svg><svg class="k" width="7" height="6"><use href="#k"/></svg><svg class="k" width="7" height="6"><use href="#k"/></svg><svg class="k" width="7" height="6"><use href="#k"/></svg></span></div>
<div class="l" style="left:-119.5px;top:464.3px;width:220px;height:18.0px;line-height:18.0px;white-space:pre">Valor Subst.</div>
<div class="f" style="left:106.0px;top:460.8px;width:123.0px;height:19.0px;line-height:19.5px;text-align:right;"><span class="st" style=""><svg class="k" width="7" height="6"><use href="#k"/></svg><svg class="k" width="7" height="6"><use href="#k"/></svg><svg class="k" width="7" height="6"><use href="#k"/></svg><svg class="k" width="7" height="6"><use href="#k"/></svg></span></div>
<div class="l" style="left:-119.5px;top:483.3px;width:220px;height:18.0px;line-height:18.0px;white-space:pre">Especie Volume</div>
<div class="f" style="left:106.0px;top:480.3px;width:123.0px;height:19.0px;line-height:19.5px;text-align:right;"></div>
<div class="l" style="left:-119.5px;top:504.6px;width:220px;height:18.0px;line-height:18.0px;white-space:pre">Qtde Volume</div>
<div class="f" style="left:106.0px;top:500.1px;width:123.0px;height:19.0px;line-height:19.5px;text-align:right;"><span class="st" style=""><svg class="k" width="7" height="6"><use href="#k"/></svg><svg class="k" width="7" height="6"><use href="#k"/></svg><svg class="k" width="7" height="6"><use href="#k"/></svg></span></div>
<div class="l" style="left:-119.5px;top:525.8px;width:220px;height:18.0px;line-height:18.0px;white-space:pre">Vlr.Pis</div>
<div class="f" style="left:106.0px;top:521.3px;width:123.0px;height:19.0px;line-height:19.5px;text-align:right;"><span class="st" style=""><svg class="k" width="7" height="6"><use href="#k"/></svg><svg class="k" width="7" height="6"><use href="#k"/></svg><svg class="k" width="7" height="6"><use href="#k"/></svg><svg class="k" width="7" height="6"><use href="#k"/></svg></span></div>
<div class="l" style="left:-119.5px;top:546.9px;width:220px;height:18.0px;line-height:18.0px;white-space:pre">Vlr.Cofins</div>
<div class="f" style="left:106.0px;top:542.4px;width:123.0px;height:19.0px;line-height:19.5px;text-align:right;"><span class="st" style=""><svg class="k" width="7" height="6"><use href="#k"/></svg><svg class="k" width="7" height="6"><use href="#k"/></svg><svg class="k" width="7" height="6"><use href="#k"/></svg><svg class="k" width="7" height="6"><use href="#k"/></svg><svg class="k" width="7" height="6"><use href="#k"/></svg><svg class="k" width="7" height="6"><use href="#k"/></svg></span></div>
<div class="l" style="left:-119.5px;top:564.2px;width:220px;height:18.0px;line-height:18.0px;white-space:pre">Base  Pis</div>
<div class="f" style="left:106.0px;top:563.7px;width:123.0px;height:19.0px;line-height:19.5px;text-align:right;"><span class="st" style=""><svg class="k" width="7" height="6"><use href="#k"/></svg><svg class="k" width="7" height="6"><use href="#k"/></svg><svg class="k" width="7" height="6"><use href="#k"/></svg><svg class="k" width="7" height="6"><use href="#k"/></svg><svg class="k" width="7" height="6"><use href="#k"/></svg><svg class="k" width="7" height="6"><use href="#k"/></svg></span></div>
<div class="l" style="left:-119.5px;top:586.2px;width:220px;height:18.0px;line-height:18.0px;white-space:pre">Base  Cofins</div>
<div class="f" style="left:106.0px;top:584.2px;width:123.0px;height:19.0px;line-height:19.5px;text-align:right;"><span class="st" style=""><svg class="k" width="7" height="6"><use href="#k"/></svg><svg class="k" width="7" height="6"><use href="#k"/></svg><svg class="k" width="7" height="6"><use href="#k"/></svg><svg class="k" width="7" height="6"><use href="#k"/></svg><svg class="k" width="7" height="6"><use href="#k"/></svg><svg class="k" width="7" height="6"><use href="#k"/></svg></span></div>
<div class="a" style="left:237px;top:397px;width:652px;height:211px;border:2px solid #e1ebf6;border-radius:2px"></div>
<div class="a" style="left:452px;top:398px;width:2px;height:136px;background:#e1ebf6"></div>
<div class="a" style="left:730px;top:398px;width:2px;height:136px;background:#e1ebf6"></div>
<div class="a" style="left:238px;top:480px;width:493px;height:2px;background:#e1ebf6"></div>
<div class="a" style="left:238px;top:532px;width:650px;height:2px;background:#e1ebf6"></div>
<div class="lg" style="left:245px;width:64px;padding-left:2.5px;top:391.5px">Despesa</div>
<div class="lg" style="left:459px;width:48px;padding-left:2.6px;top:391.5px">Totais</div>
<div class="lg" style="left:741px;width:71px;padding-left:2.8px;top:391.5px">Impressao</div>
<div class="l" style="left:108.9px;top:410.5px;width:220px;height:19.0px;line-height:19.0px;">Seguro</div>
<div class="f" style="left:332.0px;top:408.0px;width:108.0px;height:21.0px;line-height:21.5px;text-align:right;"><span class="st" style=""><svg class="k" width="7" height="6"><use href="#k"/></svg><svg class="k" width="7" height="6"><use href="#k"/></svg><svg class="k" width="7" height="6"><use href="#k"/></svg></span></div>
<div class="l" style="left:108.9px;top:433.0px;width:220px;height:19.0px;line-height:19.0px;">Acessorios</div>
<div class="f" style="left:332.0px;top:431.0px;width:108.0px;height:21.0px;line-height:21.5px;text-align:right;"><span class="st" style=""><svg class="k" width="7" height="6"><use href="#k"/></svg><svg class="k" width="7" height="6"><use href="#k"/></svg><svg class="k" width="7" height="6"><use href="#k"/></svg></span></div>
<div class="l" style="left:108.9px;top:454.0px;width:220px;height:19.0px;line-height:19.0px;">Vlr. Gnre</div>
<div class="f" style="left:332.0px;top:454.0px;width:108.0px;height:21.0px;line-height:21.5px;text-align:right;"><span class="st" style=""><svg class="k" width="7" height="6"><use href="#k"/></svg><svg class="k" width="7" height="6"><use href="#k"/></svg><svg class="k" width="7" height="6"><use href="#k"/></svg></span></div>
<div class="l" style="left:106.5px;top:487.0px;width:220px;height:18.0px;line-height:18.0px;">Pedido</div>
<div class="f" style="left:332.0px;top:485.0px;width:108.0px;height:19.0px;line-height:19.5px;text-align:left;"><span class="st" style="margin-left:-1px"><svg class="k" width="7" height="6"><use href="#k"/></svg><svg class="k" width="7" height="6"><use href="#k"/></svg><svg class="k" width="7" height="6"><use href="#k"/></svg><svg class="k" width="7" height="6"><use href="#k"/></svg><svg class="k" width="7" height="6"><use href="#k"/></svg><svg class="k" width="7" height="6"><use href="#k"/></svg><svg class="k" width="7" height="6"><use href="#k"/></svg></span></div>
<div class="l" style="left:107.8px;top:508.0px;width:220px;height:17.0px;line-height:17.0px;">Ref</div>
<div class="f" style="left:332.0px;top:506.0px;width:108.0px;height:18.0px;line-height:18.5px;text-align:left;"></div>
<div class="l" style="left:333.3px;top:409.5px;width:220px;height:19.0px;line-height:19.0px;">Ipi</div>
<div class="f" style="left:557.0px;top:408.0px;width:168.0px;height:21.0px;line-height:21.5px;text-align:right;"><span class="st" style=""><svg class="k" width="7" height="6"><use href="#k"/></svg><svg class="k" width="7" height="6"><use href="#k"/></svg><svg class="k" width="7" height="6"><use href="#k"/></svg></span></div>
<div class="l" style="left:333.3px;top:432.0px;width:220px;height:19.0px;line-height:19.0px;">Produto</div>
<div class="f" style="left:557.0px;top:431.0px;width:168.0px;height:21.0px;line-height:21.5px;text-align:right;"><span class="st" style=""><svg class="k" width="7" height="6"><use href="#k"/></svg><svg class="k" width="7" height="6"><use href="#k"/></svg><svg class="k" width="7" height="6"><use href="#k"/></svg></span></div>
<div class="l" style="left:333.3px;top:454.5px;width:220px;height:19.0px;line-height:19.0px;">Nota</div>
<div class="f" style="left:557.0px;top:454.0px;width:168.0px;height:21.0px;line-height:21.5px;text-align:right;"><span class="st" style=""><svg class="k" width="7" height="6"><use href="#k"/></svg><svg class="k" width="7" height="6"><use href="#k"/></svg><svg class="k" width="7" height="6"><use href="#k"/></svg></span></div>
<div class="l" style="left:333.3px;top:487.0px;width:220px;height:19.0px;line-height:19.0px;">Peso Liquido</div>
<div class="f" style="left:557.0px;top:483.0px;width:168.0px;height:21.0px;line-height:21.5px;text-align:right;"><span class="st" style=""><svg class="k" width="7" height="6"><use href="#k"/></svg><svg class="k" width="7" height="6"><use href="#k"/></svg><svg class="k" width="7" height="6"><use href="#k"/></svg></span></div>
<div class="l" style="left:333.3px;top:507.5px;width:220px;height:19.0px;line-height:19.0px;">Peso Bruto</div>
<div class="f" style="left:557.0px;top:506.0px;width:168.0px;height:21.0px;line-height:21.5px;text-align:right;"><span class="st" style=""><svg class="k" width="7" height="6"><use href="#k"/></svg><svg class="k" width="7" height="6"><use href="#k"/></svg><svg class="k" width="7" height="6"><use href="#k"/></svg></span></div>
<div class="b" style="left:749px;top:418px;width:49px;height:41px"><svg width="49" height="41" viewBox="0 0 49 41" style="position:absolute;left:-1px;top:-1px"><path d="M10 15 L24 2 L32 9 L19 22 Z" fill="#dcdcdc" stroke="#111" stroke-width="1.3" stroke-linejoin="round"/><path d="M11.5 14 L23 3.5" stroke="#c8c060" stroke-width="1.6"/><path d="M10 15 L19 22 L19 30 L11 24 Z" fill="#a8a8a8" stroke="#111" stroke-width="1.3" stroke-linejoin="round"/><path d="M19 22 L32 9 L32 16 L19 30 Z" fill="#8c8c8c" stroke="#111" stroke-width="1.1"/><path d="M21 23 L33 13 L40 24 L30.5 33 Z" fill="#f4f4f4" stroke="#111" stroke-width="1.3" stroke-linejoin="round"/><path d="M24 24 L33 16.5 M26 26.5 L35 19 M28 29 L37 21.5" stroke="#999" stroke-width="0.8"/><path d="M21 23 L21 31 L26 34" stroke="#111" stroke-width="1.5" fill="none"/></svg></div>
<div class="b" style="left:819px;top:416px;width:51px;height:35px"><svg width="51" height="35" viewBox="0 0 51 35" style="position:absolute;left:-1px;top:-1px"><rect x="13" y="3" width="12.5" height="24" fill="#eef4fb" stroke="#a8c4e4" stroke-width="0.9"/><path d="M15 7h8M15 9.5h8M15 12h8M15 14.5h8M15 17h8M15 19.5h6M15 22h6" stroke="#8fb3dc" stroke-width="1"/><path d="M25.5 7 L29.5 7 L31 11 L31 18 L25.5 18 Z" fill="#fff" stroke="#9ab6da" stroke-width="0.8"/><path d="M20 18 L36.5 18 L37 25 L20 25 Z" fill="#7e9ccc" stroke="#5b7fb8" stroke-width="0.8"/><rect x="22" y="25" width="13" height="2" fill="#5b7fb8"/><path d="M24 29h8" stroke="#9ab6da" stroke-width="1" stroke-dasharray="1 1"/></svg></div>
<div class="b" style="left:819.0px;top:455.0px;width:51.0px;height:17.0px;line-height:15.0px;">XML</div>
<div class="f" style="left:741.0px;top:476.0px;width:134.0px;height:20.0px;line-height:20.5px;text-align:left;"></div>
<div class="f" style="left:741.0px;top:497.0px;width:134.0px;height:20.0px;line-height:20.5px;text-align:left;"></div>
<div class="a" style="left:485px;top:538px;font-size:11.4px;line-height:14px;color:#111;-webkit-text-stroke-width:0.2px">Chave De Acesso / Status NFE</div>
<div class="f" style="left:246.0px;top:558.0px;width:633.0px;height:21.0px;line-height:21.5px;text-align:left;"></div>
<div class="f" style="left:246.0px;top:582.0px;width:633.0px;height:21.0px;line-height:21.5px;text-align:left;"></div>
<div class="a" style="left:381px;top:580px;width:347px;height:27px;border:3px solid #f00"></div>
<div class="a" style="left:247px;top:584px;width:633px;height:20px;line-height:20px;text-align:center;font-size:11.5px;color:#2b2b9a;-webkit-text-stroke-width:0.15px">Producao - Status: 100 - Autorizado o uso da NF-e</div>
<div class="a" style="left:16px;top:613.5px;width:132px;height:13px;background:#ff0;color:#ff2800;-webkit-text-stroke-width:0.15px;font-size:10px;line-height:14.5px;white-space:pre;padding-left:1px">Controle 399 -  Ocultar chave</div>
<div class="a" style="left:15px;top:643px;font-size:10px;line-height:12px;color:#111;-webkit-text-stroke-width:0.2px">FIM</div>
<div class="b" style="left:424.0px;top:614.0px;width:277.0px;height:21.0px;line-height:19.0px;border-color:#d0d6de #9fb2c8 #7e97b3 #d0d6de">Proximo Numero Nota = 15396</div>
<div class="f" style="left:753.0px;top:612.0px;width:37.0px;height:21.0px;line-height:21.5px;text-align:center;color:#a0a0a0;padding:0">E</div>
<div class="b" style="left:797.0px;top:614.0px;width:92.0px;height:19.0px;line-height:17.0px;">Ocorrencia NFE</div>
<div class="a" style="left:7px;top:675px;width:912px;height:2px;background:#f0f5fa;border-bottom:1px solid #7e97b3"></div>
<div class="a" style="left:56px;top:677.5px;width:45px;height:22.5px;background:#cdd9ea;border-radius:0 0 5px 5px;font-size:11.3px;line-height:22px;text-align:center;color:#222">Boleto</div>
<div class="a" style="left:104.5px;top:677.5px;width:44px;height:22.5px;background:#cdd9ea;border-radius:0 0 5px 5px;font-size:11.3px;line-height:22px;text-align:center;color:#222">Oe</div>
<div class="a" style="left:6px;top:673px;width:46px;height:28px;border:3px solid #f00;background:#8fb4d9;border-radius:2px;font-size:11.5px;font-weight:bold;line-height:24px;padding-left:3px;text-align:center;color:#1c2430">Nf</div>
<div class="a" style="left:0;top:727px;width:1091px;height:1px;background:#8e969e"></div>
<div class="a" style="left:0;top:728px;width:1091px;height:4px;background:#fff"></div>
<div class="a" style="left:-5px;top:357px;width:10px;height:10px;border:1.5px solid #8c8c8c;border-radius:50%;background:#fff"></div>
<div class="a" style="left:539px;top:723px;width:10px;height:10px;border:1.5px solid #8c8c8c;border-radius:50%;background:#fff"></div>
<div class="a" style="left:1084px;top:357px;width:10px;height:10px;border:1.5px solid #8c8c8c;border-radius:50%;background:#fff"></div>
<div class="a" style="left:1083px;top:724px;width:10px;height:10px;border:1.5px solid #8c8c8c;border-radius:50%;background:#fff"></div>
<div class="a" style="left:10px;top:103px;width:429px;height:33px;border:3px solid #f00"></div>
</body></html>
